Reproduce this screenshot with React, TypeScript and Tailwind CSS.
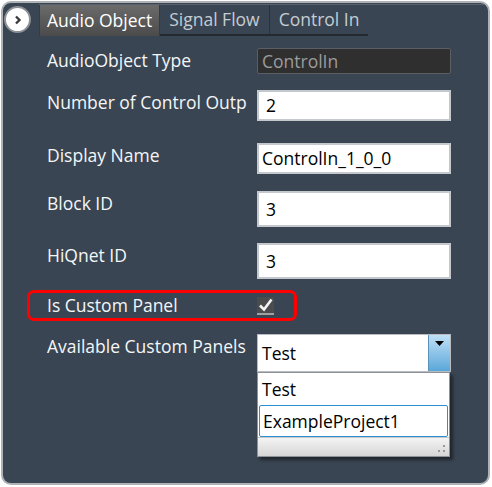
const font = { fontFamily: '"Open Sans", "Noto Sans", sans-serif' };

function Field({
  label,
  value,
  top,
  h,
  pad = "pl-[4px]",
  dark = false,
}: {
  label: string;
  value: string;
  top: string;
  h: string;
  pad?: string;
  dark?: boolean;
}) {
  return (
    <div className={`flex items-start ${top}`}>
      <div className="w-[254px] pl-[44px] pr-[12px] text-[17.5px] leading-[24px] text-[#f4f6f8] whitespace-nowrap overflow-hidden">
        {label}
      </div>
      <div
        className={`w-[194px] ${h} flex items-center ${pad} text-[17.5px] ${
          dark
            ? "bg-[#2f2f30] border border-[#5b5f63] rounded-[2px] text-[#9c9c9c]"
            : "bg-white border-2 border-[#c4c8cd] text-black"
        }`}
      >
        {value}
      </div>
    </div>
  );
}

export default function App() {
  return (
    <div className="w-[492px] h-[487px] bg-white p-[1px]" style={font}>
      <div className="relative w-[489px] h-[484px] rounded-[10px] border-2 border-[#aeb2b6] bg-[#394552] overflow-hidden">
        {/* collapse button */}
        <div className="absolute left-[1px] top-[3px] w-[27px] h-[27px] rounded-full bg-white border-2 border-[#8c9095] flex items-center justify-center">
          <svg width="10" height="10" viewBox="0 0 10 10">
            <path d="M3 1.5 L6.5 5 L3 8.5" fill="none" stroke="#3c3c3c" strokeWidth="2.4" />
          </svg>
        </div>

        {/* tabs */}
        <div className="flex ml-[36px] mt-[1px] h-[32px] border-t border-[#5a636d]">
          <div className="px-[7px] flex items-center text-[17.5px] text-white bg-gradient-to-b from-[#6b6b6b] to-[#4b4b4b] border-x border-[#3a3a3a]">
            Audio Object
          </div>
          <div className="flex border-b-2 border-[#23292f]">
            <div className="px-[9px] flex items-center text-[17.5px] text-[#c5ccd3] border-r border-[#2a3138]">
              Signal Flow
            </div>
            <div className="px-[9px] flex items-center text-[17.5px] text-[#c5ccd3]">
              Control In
            </div>
          </div>
        </div>

        <div className="flex flex-col">
          <Field label="AudioObject Type" value="ControlIn" top="mt-[12px]" h="h-[26px]" dark />
          <Field label="Number of Control Outp" value="2" top="mt-[16px]" h="h-[31px]" pad="pl-[7px]" />
          <Field label="Display Name" value="ControlIn_1_0_0" top="mt-[22px]" h="h-[31px]" pad="pl-[3px]" />
          <Field label="Block ID" value="3" top="mt-[17px]" h="h-[36px]" pad="pl-[7px]" />
          <Field label="HiQnet ID" value="3" top="mt-[16px]" h="h-[36px]" pad="pl-[7px]" />

          {/* custom panel row */}
          <div className="mt-[11px] ml-[24px] w-[270px] h-[31px] rounded-[7px] border-[3px] border-[#ff0000] flex items-center">
            <div className="w-[227px] pl-[17px] text-[17.5px] text-[#f4f6f8]">Is Custom Panel</div>
            <div className="w-[17px] h-[18px] bg-[#4a4c4e] border-b-2 border-[#a0a0a0] flex items-center justify-center">
              <svg width="15" height="14" viewBox="0 0 15 14">
                <path d="M2 7.5 L6 11.5 L13.5 1.5" fill="none" stroke="#f4f4f4" strokeWidth="2.6" />
              </svg>
            </div>
          </div>

          {/* combo */}
          <div className="flex items-start mt-[13px]">
            <div className="w-[254px] pl-[44px] text-[17.5px] leading-[24px] text-[#f4f6f8] whitespace-nowrap">
              Available Custom Panels
            </div>
            <div className="relative w-[194px]">
              <div className="h-[38px] flex bg-white border border-[#b8bcc0]">
                <div className="flex-1 flex items-center pl-[4px] text-[17.5px] text-black">Test</div>
                <div className="w-[22px] bg-gradient-to-b from-[#bfe0f5] to-[#5aa7da] border-l border-[#5b92b8] flex justify-center pt-[6px]">
                  <svg width="9" height="5" viewBox="0 0 9 5">
                    <path d="M0 0 H9 L4.5 5 Z" fill="#000" />
                  </svg>
                </div>
              </div>
              <div className="w-[193px] bg-white border border-[#8f9397] shadow-[3px_3px_3px_rgba(0,0,0,0.45)]">
                <div className="h-[32px] flex items-center pl-[4px] text-[17.5px] text-black">Test</div>
                <div className="mx-[1px] h-[32px] flex items-center pl-[3px] text-[17.5px] text-black border border-[#2b8fd6] rounded-[2px]">
                  ExampleProject1
                </div>
                <div className="h-[19px] bg-gradient-to-b from-[#f4f4f4] to-[#d6d6d6] border-t border-[#c8c8c8] flex justify-end items-end pr-[3px] pb-[3px]">
                  <svg width="8" height="8" viewBox="0 0 8 8">
                    <rect x="5" y="0" width="2" height="2" fill="#9a9a9a" />
                    <rect x="5" y="5" width="2" height="2" fill="#9a9a9a" />
                    <rect x="0" y="5" width="2" height="2" fill="#9a9a9a" />
                  </svg>
                </div>
              </div>
            </div>
          </div>
        </div>
      </div>
    </div>
  );
}
